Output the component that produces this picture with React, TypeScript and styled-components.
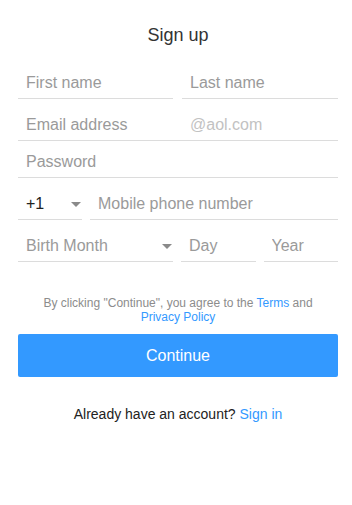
import React from "react";
import styled, { createGlobalStyle } from "styled-components";

const Global = createGlobalStyle`
  html, body { margin: 0; padding: 0; background: #fff; }
  body { font-family: "Liberation Sans", Arial, sans-serif; }
  * { box-sizing: border-box; }
`;

const Page = styled.div`
  width: 352px;
  padding: 24px 14px 0 18px;
  display: flex;
  flex-direction: column;
`;

const Title = styled.h1`
  margin: 0;
  font-size: 18px;
  line-height: 22px;
  font-weight: 400;
  color: #333;
  text-align: center;
`;

const Form = styled.form`
  display: flex;
  flex-direction: column;
  margin-top: 20px;
`;

const Row = styled.div<{ $cols: string; $gap: number; $top: number }>`
  display: grid;
  grid-template-columns: ${(p) => p.$cols};
  column-gap: ${(p) => p.$gap}px;
  margin-top: ${(p) => p.$top}px;
`;

const Field = styled.div`
  height: 33px;
  border-bottom: 1px solid #dcdcdc;
  display: flex;
  align-items: center;
  padding: 2px 0 0 8px;
  min-width: 0;
`;

const Input = styled.input`
  flex: 1;
  min-width: 0;
  border: 0;
  outline: none;
  background: transparent;
  padding: 0;
  font-family: "Liberation Sans", Arial, sans-serif;
  font-size: 16px;
  color: #333;
  &::placeholder { color: #9a9a9a; opacity: 1; }
`;

const Suffix = styled.span`
  width: 148px;
  font-size: 16px;
  color: #c2c2c2;
`;

const SelectText = styled.span<{ $muted?: boolean }>`
  flex: 1;
  font-size: 16px;
  color: ${(p) => (p.$muted ? "#9a9a9a" : "#222")};
`;

const Caret = styled.svg`
  width: 10px;
  height: 5px;
  margin-right: 1px;
  flex: none;
`;

const Arrow = () => (
  <Caret viewBox="0 0 10 5">
    <path d="M0 0 L10 0 L5 5 Z" fill="#8a8a8a" />
  </Caret>
);

const Terms = styled.p`
  margin: 34px 0 0;
  font-size: 12px;
  line-height: 14px;
  color: #8c8c8c;
  text-align: center;
`;

const Link = styled.a`
  color: #3399ff;
  text-decoration: none;
`;

const Button = styled.button`
  margin-top: 10px;
  height: 43px;
  width: 100%;
  border: 0;
  border-radius: 2px;
  background: #3399ff;
  color: #fff;
  font-family: "Liberation Sans", Arial, sans-serif;
  font-size: 16px;
`;

const Footer = styled.p`
  margin: 29px 0 0;
  font-size: 14px;
  line-height: 16px;
  color: #222;
  text-align: center;
`;

export default function App() {
  return (
    <>
      <Global />
      <Page>
        <Title>Sign up</Title>
        <Form onSubmit={(e) => e.preventDefault()}>
          <Row $cols="155px 1fr" $gap={9} $top={0}>
            <Field><Input placeholder="First name" /></Field>
            <Field><Input placeholder="Last name" /></Field>
          </Row>
          <Row $cols="1fr" $gap={0} $top={9}>
            <Field>
              <Input placeholder="Email address" />
              <Suffix>@aol.com</Suffix>
            </Field>
          </Row>
          <Row $cols="1fr" $gap={0} $top={4}>
            <Field><Input type="text" placeholder="Password" /></Field>
          </Row>
          <Row $cols="64px 1fr" $gap={8} $top={9}>
            <Field>
              <SelectText>+1</SelectText>
              <Arrow />
            </Field>
            <Field><Input placeholder="Mobile phone number" /></Field>
          </Row>
          <Row $cols="155px 1fr 1fr" $gap={8} $top={9}>
            <Field>
              <SelectText $muted>Birth Month</SelectText>
              <Arrow />
            </Field>
            <Field><Input placeholder="Day" /></Field>
            <Field><Input placeholder="Year" /></Field>
          </Row>
          <Terms>
            By clicking "Continue", you agree to the <Link href="#">Terms</Link> and
            <br />
            <Link href="#">Privacy Policy</Link>
          </Terms>
          <Button type="submit">Continue</Button>
        </Form>
        <Footer>
          Already have an account? <Link href="#">Sign in</Link>
        </Footer>
      </Page>
    </>
  );
}
